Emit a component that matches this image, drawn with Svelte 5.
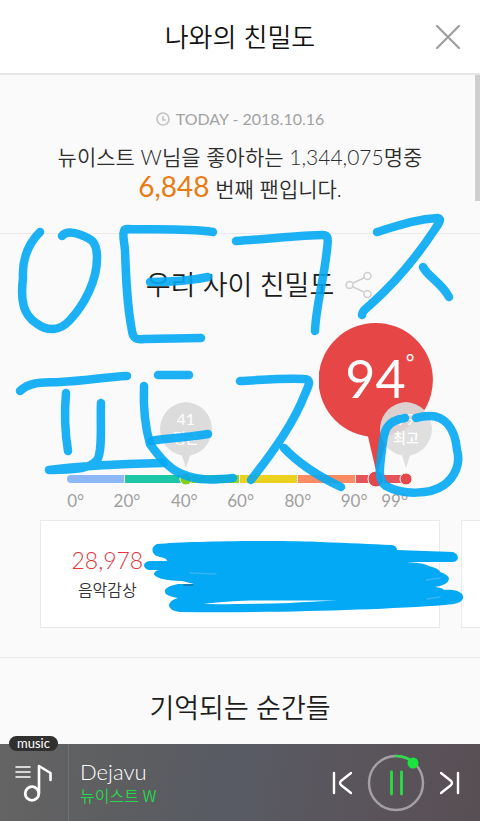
<script>
  const segments = [
    { from: 0, to: 17, color: '#8cb9f5' },
    { from: 17, to: 34, color: '#1dc6a4' },
    { from: 34, to: 51, color: '#93d51b' },
    { from: 51, to: 68, color: '#edd11f' },
    { from: 68, to: 85, color: '#fb8b63' },
    { from: 85, to: 100, color: '#e4555a' }
  ];
  const ticks = [0, 20, 40, 60, 80, 90, 99];

  const strokes = [
    'M40 232 C28 244 22 258 23 278 C20 302 24 315 36 323 C48 332 60 331 70 320 C84 305 97 281 97 258 C97 242 92 239 81 235 C73 232 66 231 62 236',
    'M213 232 C185 228 155 230 127 229 C121 229 124 240 125 250 C126 280 127 305 132 331 C133 339 137 340 144 339 L201 338',
    'M150 282 C170 282 190 281 208 277',
    'M236 241 C270 239 300 235 323 235 C329 235 328 241 327 249 C324 280 316 305 315 331',
    'M377 232 C397 226 415 219 438 218 C442 219 439 223 435 229 C416 258 395 283 370 305 C364 310 362 312 362 315',
    'M423 267 C428 277 441 282 449 297',
    'M20 391 C31 381 43 383 60 382 C85 381 105 377 127 376',
    'M66 393 C64 415 65 433 68 451',
    'M101 403 C100 420 103 452 97 460 C87 471 70 469 49 470 C80 466 120 464 163 463',
    'M158 375 H189',
    'M144 386 C143 410 146 430 150 444 C157 454 168 469 182 474 C198 481 215 480 233 478',
    'M151 441 C165 438 185 438 208 434',
    'M240 381 C262 380 282 378 304 379 C312 379 309 385 305 394 C294 422 276 448 251 480',
    'M284 448 C300 465 322 478 341 487',
    'M405 418 C384 421 384 433 382 449 C379 472 378 480 386 486 C402 495 430 495 444 485 C455 477 461 463 457 450 C455 427 444 416 430 416 C424 416 419 417 416 418'
  ];
</script>

<div class="app">
  <header>
    <h1>나와의 친밀도</h1>
    <button class="close" aria-label="닫기">
      <svg width="26" height="26" viewBox="0 0 26 26"><path d="M2 2 24 24M24 2 2 24" fill="none" stroke="#a0a0a0" stroke-width="2.3" stroke-linecap="round" /></svg>
    </button>
  </header>

  <main>
    <section class="intro">
      <p class="today">
        <svg width="14" height="14" viewBox="0 0 14 14" fill="none" stroke="#c4c4c4" stroke-width="1.7"><circle cx="7" cy="7" r="6" /><path d="M7 4v4h3" /></svg>
        TODAY - 2018.10.16
      </p>
      <p class="rank">뉴이스트 W님을 좋아하는 1,344,075명중</p>
      <p class="rank"><strong>6,848</strong> 번째 팬입니다.</p>
    </section>

    <section class="affinity">
      <div class="heading">
        <h2>우리 사이 친밀도</h2>
        <button class="share" aria-label="공유">
          <svg width="28" height="28" viewBox="0 0 28 28" fill="none" stroke="#cfcfcf" stroke-width="1.5"><circle cx="4.500" cy="14" r="3.500" /><circle cx="22.500" cy="5" r="3.500" /><circle cx="22.500" cy="23" r="3.500" /><path d="M8 12 19 7M8 16l11 5" /></svg>
        </button>
      </div>

      <div class="gauge">
        <div class="bar">
          {#each segments as s}
            <i style="flex-grow:{s.to - s.from};background:{s.color}"></i>
          {/each}
          <b class="dot low"></b>
          <b class="dot now"></b>
          <b class="dot top"></b>
          <div class="bubble big">
            <svg width="114" height="152" viewBox="0 0 114 152"><path d="M57 0a57 57 0 0 1 12 112.700L58 152 49 113.500A57 57 0 0 1 57 0Z" fill="#e64646" /></svg>
            <span class="value">94<sup>°</sup></span>
          </div>
          <div class="bubble small low">
            <svg width="54" height="66" viewBox="0 0 54 66"><path d="M27 0a27 27 0 0 1 4 53.500L27 66 23 53.500A27 27 0 0 1 27 0Z" fill="#dcdcdc" /></svg>
            <span>41<em>평균</em></span>
          </div>
          <div class="bubble small top">
            <svg width="54" height="66" viewBox="0 0 54 66"><path d="M27 0a27 27 0 0 1 4 53.500L27 66 23 53.500A27 27 0 0 1 27 0Z" fill="#dcdcdc" fill-opacity=".92" /></svg>
            <span>99<em>최고</em></span>
          </div>
        </div>
        <div class="ticks">
          {#each ticks as t}<span>{t}°</span>{/each}
        </div>
      </div>

      <div class="cards">
        <dl class="card">
          <div><dd>28,978</dd><dt>음악감상</dt></div>
        </dl>
        <div class="card"></div>
      </div>
    </section>

    <section class="moments"><h2>기억되는 순간들</h2></section>
    <div class="thumb"></div>
  </main>

  <footer>
    <span class="badge">music</span>
    <button class="list" aria-label="재생목록">
      <svg width="38" height="40" viewBox="0 0 38 40" fill="none" stroke="#fff" stroke-linecap="round" stroke-linejoin="round"><path d="M1 4h14M1 9h14M1 14h14" stroke-width="1.500" /><circle cx="17" cy="30.500" r="6.800" stroke-width="2.800" /><path d="M24 30V3l11.500 7v7" stroke-width="2.600" /></svg>
    </button>
    <div class="song">
      <p class="name">Dejavu</p>
      <p class="artist">뉴이스트 W</p>
    </div>
    <div class="controls">
      <button aria-label="이전 곡"><svg width="20" height="24" viewBox="0 0 20 24" fill="none" stroke="#fff" stroke-width="2.400" stroke-linecap="round"><path d="M2 2v20M19 2 9.500 9.500Q6.500 12 9.500 14.500L19 22" /></svg></button>
      <button aria-label="일시정지"><svg width="58" height="58" viewBox="0 0 58 58" fill="none" stroke-linecap="round"><circle cx="29" cy="29" r="27" stroke="#a39fa3" stroke-width="2.500" /><path d="M29 2a27 27 0 0 1 17 6" stroke="#27df44" stroke-width="2.500" /><circle cx="46" cy="9" r="5.500" fill="#18e43d" /><path d="M24.500 18v22M34.500 18v22" stroke="#27df44" stroke-width="2.800" /></svg></button>
      <button aria-label="다음 곡"><svg width="20" height="24" viewBox="0 0 20 24" fill="none" stroke="#fff" stroke-width="2.400" stroke-linecap="round"><path d="M18 2v20M1 2l9.500 7.500Q13.500 12 10.500 14.500L1 22" /></svg></button>
    </div>
  </footer>

  <!-- freehand pen layer -->
  <svg class="pen" viewBox="0 0 480 821" fill="none" stroke="#03a9f4" stroke-linecap="round" stroke-linejoin="round" aria-hidden="true">
    {#each strokes as d}<path {d} stroke-width="8.500" stroke-opacity=".9" />{/each}
    <path fill="#03a9f4" stroke="none" d="M157 544 C190 541 290 540 320 542 C350 543 370 544 392 545 Q397 546 397 550 L453 552 Q458 554 458 558 Q457 562 452 562 L407 562 Q425 563 429 566 Q440 569 440 572 Q449 575 449 579 Q448 585 435 587 Q443 588 444 590 C455 589 464 592 463 598 C462 603 455 604 445 605 C380 610 270 613 180 612 C172 611 169 608 169 605 Q170 600 178 598 C168 596 164 594 165 590 Q167 586 178 584 L194 584 L182 581 C164 581 154 577 154 574 Q155 570 160 570 L149 570 Q144 569 144 565 Q145 561 151 561 L167 561 Q167 558 160 557 C151 555 150 547 157 544Z" />
    <path fill="#fff" stroke="none" d="M203 604 Q225 601 250 600.500 L338 600.500 Q310 601.500 290 603 Q240 604.500 203 604Z" />
    <path d="M190 573 L216 574 M426 580 L440 578 M427 599 L440 597" stroke="#35b5f2" stroke-width="1.500" />
    <path d="M184 585 H193" stroke="#24566d" stroke-width="1" />
  </svg>
</div>

<style>
  :global(body) { background: #fafafa; }
  .app {
    position: relative;
    display: flex;
    flex-direction: column;
    height: 100vh;
    overflow: hidden;
    background: #fafafa;
    color: #2d2d2d;
    font-family: Lato, "Noto Sans CJK KR", sans-serif;
    font-weight: 350;
  }
  h1, h2, p, dl, dd, dt { margin: 0; font-weight: 350; }
  button { display: block; padding: 0; border: 0; background: none; cursor: pointer; }
  svg { display: block; }
  header {
    flex: none;
    display: grid;
    grid-template-columns: 1fr auto 1fr;
    align-items: center;
    height: 73px;
    border-bottom: 2px solid #e6e6e6;
    background: #fff;
  }
  h1 { grid-column: 2; font-size: 26px; line-height: 36px; color: #111; }
  .close { justify-self: end; margin-right: 19px; }
  main { position: relative; flex: 1; min-height: 0; overflow: hidden; }
  section { border-bottom: 1px solid #eaeaea; text-align: center; }
  .intro { padding: 35px 20px 30px; }
  .today {
    display: flex;
    justify-content: center;
    align-items: center;
    gap: 6px;
    margin-bottom: 13px;
    font-size: 16px;
    line-height: 18px;
    font-weight: 400;
    color: #a2a2a2;
  }
  .rank { height: 31px; font-size: 21px; line-height: 31px; }
  strong { font-size: 28px; font-weight: 400; line-height: 28px; color: #ea7a12; }
  .affinity { padding: 31px 0 29px; }
  .heading { display: grid; grid-template-columns: 1fr auto 1fr; align-items: center; }
  h2 { grid-column: 2; font-size: 27px; line-height: 40px; color: #1c1c1c; }
  .share { margin-left: 11px; }
  .gauge { padding: 170px 15% 8px 14%; }
  .bar { position: relative; display: flex; gap: 1px; height: 8px; margin-right: 2px; }
  .bar i:first-child { border-radius: 4px 0 0 4px; }
  .dot { position: absolute; top: 50%; transform: translate(-50%, -50%); border: 1px solid #fafafa; border-radius: 50%; }
  .dot.low { left: 35%; width: 11px; height: 11px; background: #84ce10; }
  .dot.now { left: 91%; width: 15px; height: 15px; background: #e4474c; }
  .dot.top { left: 100%; width: 11px; height: 11px; background: #e4474c; }
  .bubble { position: absolute; transform: translateX(-50%); color: #fff; }
  .big { left: 91%; bottom: 8px; }
  .big .value { position: absolute; left: 0; right: 0; top: 24px; font-size: 52px; line-height: 62px; font-weight: 400; }
  sup { position: absolute; top: 0; font-size: 21px; line-height: 30px; }
  .small { bottom: 15px; font-size: 16px; line-height: 19px; font-weight: 400; }
  .small span { position: absolute; left: 0; right: 0; top: 7px; }
  .small em { display: block; font-size: 14px; font-style: normal; font-weight: 500; }
  .small.low { left: 35%; }
  .small.top { left: 100%; }
  .ticks {
    display: grid;
    grid-template-columns: 47fr 58fr 57fr 58fr 57fr 41fr 22fr;
    margin-top: 7px;
    font-size: 17px;
    line-height: 22px;
    font-weight: 400;
    text-align: left;
    color: #a0a0a0;
  }
  .cards { display: flex; gap: 21px; padding: 0 40px; overflow: hidden; }
  .card {
    box-sizing: border-box;
    flex: 0 0 100%;
    display: grid;
    grid-template-columns: repeat(3, 1fr);
    min-height: 108px;
    padding-top: 24px;
    border: 1px solid #eaeaea;
    background: #fff;
  }
  .card div { display: flex; flex-direction: column; gap: 5px; }
  dd { font-size: 23px; line-height: 30px; color: #e2383e; }
  dt { font-size: 16px; line-height: 20px; color: #333; }
  .moments { padding: 30px 0; border: 0; }
  .thumb { position: absolute; top: 0; right: 0; width: 5px; height: 126px; background: #cfcfcf; }
  footer {
    position: relative;
    flex: none;
    display: flex;
    align-items: center;
    height: 77px;
    background: linear-gradient(100deg, #646464, #5c5d60 30%, #585b65 48%, #5a565d 68%, #584f54);
  }
  .badge {
    position: absolute;
    left: 9px;
    top: -8px;
    width: 49px;
    height: 15px;
    border-radius: 8px;
    background: #303030;
    color: #fff;
    font: 400 13px/14px Lato, sans-serif;
    text-align: center;
  }
  .list { align-self: stretch; padding: 0 15px; border-right: 1px solid #707072; }
  .song { flex: 1; padding-left: 11px; }
  .name { font-size: 22px; line-height: 25px; color: #fff; }
  .artist { font-family: "Noto Sans CJK KR", sans-serif; font-size: 16px; line-height: 22px; color: #27d84c; }
  .controls { display: flex; align-items: center; gap: 15px; margin-right: 20px; }
  .pen { position: absolute; left: 0; top: 0; width: 100%; pointer-events: none; }
</style>
